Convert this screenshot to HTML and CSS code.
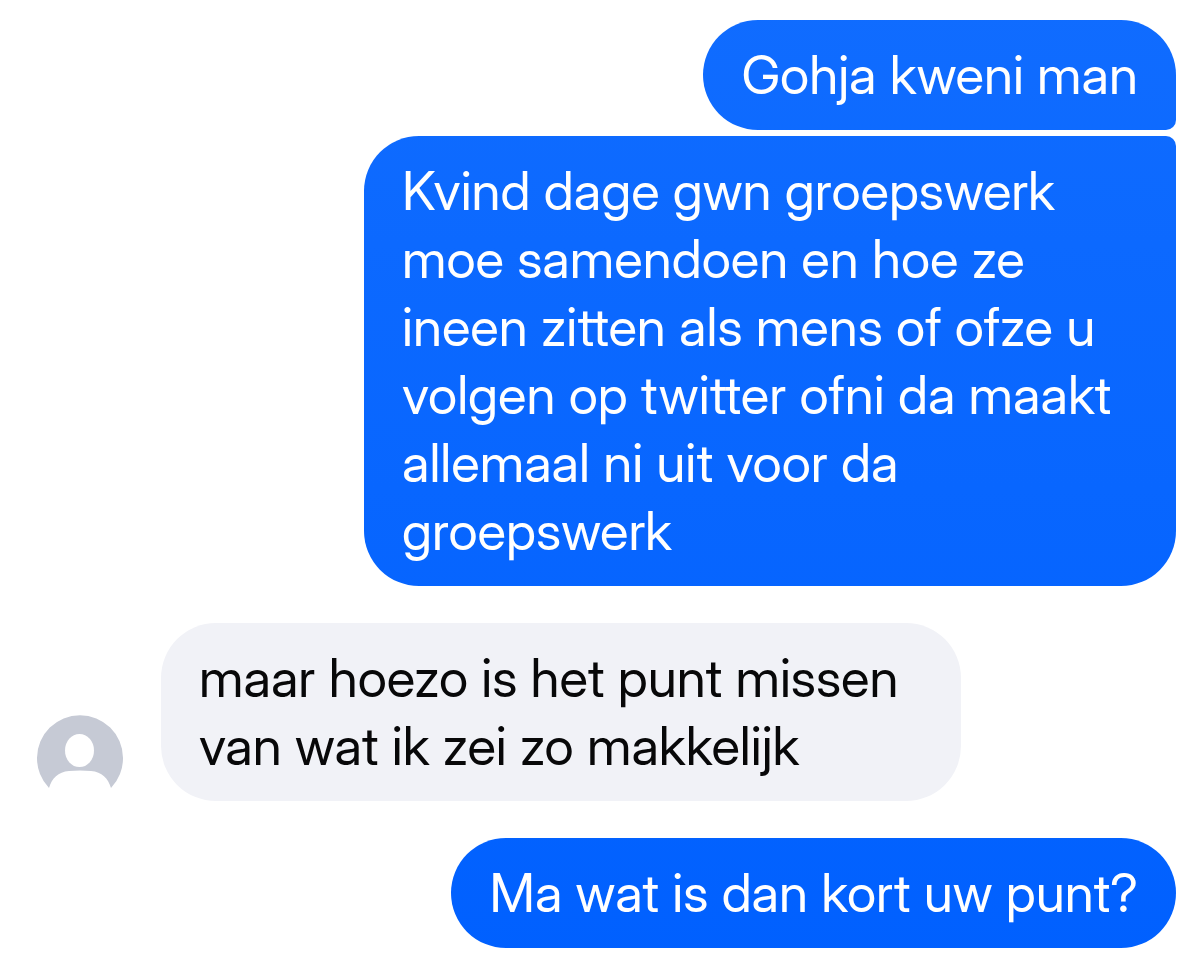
FILE: index.html
```
<!DOCTYPE html>
<html lang="nl">
<head>
    <meta charset="UTF-8">
    <meta name="viewport" content="width=device-width, initial-scale=1.0">
    <title>Chat</title>
    <link rel="stylesheet" href="styles.css">
</head>
<body>

    <main class="chat">
        <div class="group sent">
            <p class="bubble first">Gohja kweni man</p>
            <p class="bubble last">Kvind dage gwn groepswerk moe samendoen en hoe ze ineen zitten als mens of ofze u volgen op twitter ofni da maakt allemaal ni uit voor da groepswerk</p>
        </div>

        <div class="group received">
            <svg class="avatar" viewBox="0 0 86 86" aria-hidden="true">
                <path fill="#c6cad5" d="M12 73 A43 43 0 1 1 74 73 C71 63 65 57 54 56 Q43 55 32 56 C21 57 15 63 12 73 Z"/>
                <ellipse fill="#fff" cx="42.5" cy="35.5" rx="14.5" ry="16.5"/>
            </svg>
            <p class="bubble">maar hoezo is het punt missen van wat ik zei zo makkelijk</p>
        </div>

        <div class="group sent">
            <p class="bubble">Ma wat is dan kort uw punt?</p>
        </div>
    </main>

</body>
</html>
```
FILE: styles.css
```
body {
    margin: 0;
    background-color: #fff;
    font-family: "Inter Display", Inter, "Liberation Sans", sans-serif;
    font-variant-ligatures: none;
    font-size: 53px;
    line-height: 68px;
    color: #080809;
}

.chat {
    display: flex;
    flex-direction: column;
    gap: 37px;
    padding: 20px 24px 28px 37px;
}

.group {
    display: flex;
}

.sent {
    flex-direction: column;
    align-items: flex-end;
    gap: 6px;
}

.received {
    align-items: flex-end;
    gap: 38px;
}

.bubble {
    margin: 0;
    padding: 21px 38px;
    border-radius: 55px;
    box-sizing: border-box;
    max-width: 812px;
}

/* one gradient runs behind all sent messages */
.sent .bubble {
    background: linear-gradient(#106cff, #0060ff) fixed;
    color: #fff;
}

.sent .first {
    border-bottom-right-radius: 10px;
}

.sent .last {
    border-top-right-radius: 10px;
}

.received .bubble {
    background-color: #f1f2f7;
    max-width: 800px;
}

.avatar {
    flex: none;
    width: 86px;
    height: 86px;
}
```
